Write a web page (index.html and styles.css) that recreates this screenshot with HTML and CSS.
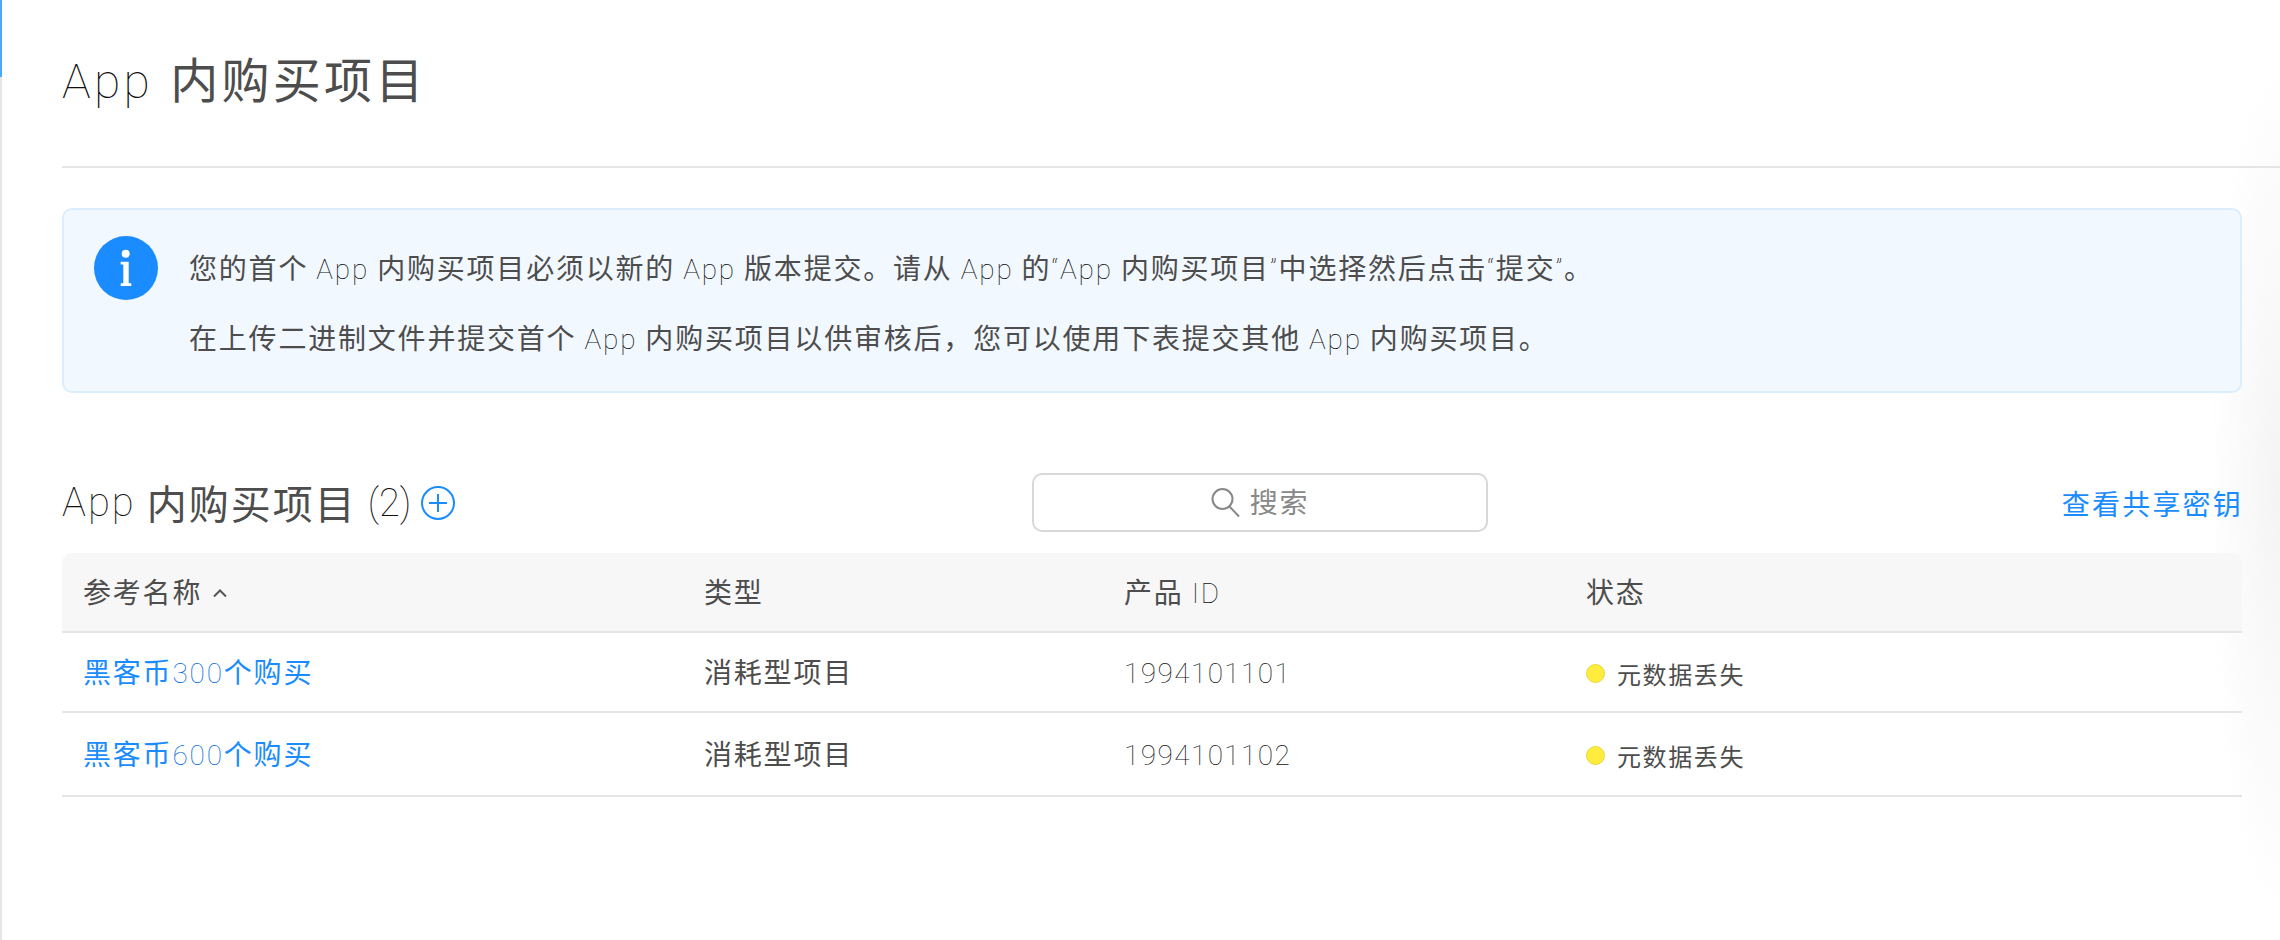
FILE: index.html
```html
<!DOCTYPE html>
<html lang="zh-CN">
<head>
    <meta charset="UTF-8">
    <title>App 内购买项目</title>
    <link rel="stylesheet" href="styles.css">
</head>
<body>
    <div class="page">
        <div class="rail"><div class="rail-active"></div></div>
        <main class="main">
            <header class="page-header">
                <h1><span class="thin">App</span> 内购买项目</h1>
            </header>

            <section class="notice">
                <svg class="notice-icon" viewBox="0 0 64 64" width="64" height="64">
                    <circle cx="32" cy="32" r="32" fill="#1a8cff"/>
                    <circle cx="31.7" cy="17.7" r="4" fill="#fff"/>
                    <path d="M26.7 25.7h8v21.6h2.6V50H26.7v-2.7h2.6V28.4h-2.6z" fill="#fff"/>
                </svg>
                <div class="notice-text">
                    <p>您的首个 <span class="thin">App</span> 内购买项目必须以新的 <span class="thin">App</span> 版本提交。请从 <span class="thin">App</span> 的<span class="thin">“App</span> 内购买项目<span class="thin">”</span>中选择然后点击<span class="thin">“</span>提交<span class="thin">”</span>。</p>
                    <p>在上传二进制文件并提交首个 <span class="thin">App</span> 内购买项目以供审核后，您可以使用下表提交其他 <span class="thin">App</span> 内购买项目。</p>
                </div>
            </section>

            <section class="list-head">
                <h2><span class="thin">App</span> 内购买项目 <span class="thin count">(2)</span>
                    <svg class="add-icon" viewBox="0 0 34 34" width="34" height="34">
                        <circle cx="17" cy="17" r="16" fill="none" stroke="#1a8cff" stroke-width="2"/>
                        <path d="M8 17h18M17 8v18" fill="none" stroke="#1a8cff" stroke-width="2"/>
                    </svg>
                </h2>
                <div class="search">
                    <svg viewBox="0 0 30 30" width="30" height="30">
                        <circle cx="11.5" cy="11" r="10" fill="none" stroke="#888" stroke-width="2"/>
                        <path d="M18.5 18.5l9.5 10" fill="none" stroke="#888" stroke-width="2"/>
                    </svg>
                    <span class="search-label">搜索</span>
                </div>
                <a class="shared-key" href="#">查看共享密钥</a>
            </section>

            <table class="products">
                <thead>
                    <tr>
                        <th class="col-name">参考名称
                            <svg class="sort-icon" viewBox="0 0 14 8" width="14" height="8">
                                <path d="M1 7.5l6-6 6 6" fill="none" stroke="#555" stroke-width="2"/>
                            </svg>
                        </th>
                        <th class="col-type">类型</th>
                        <th class="col-id">产品 <span class="thin">ID</span></th>
                        <th>状态</th>
                    </tr>
                </thead>
                <tbody>
                    <tr>
                        <td><a href="#">黑客币<span class="thin">300</span>个购买</a></td>
                        <td>消耗型项目</td>
                        <td><span class="thin num">1994101101</span></td>
                        <td><span class="status"><i class="dot"></i>元数据丢失</span></td>
                    </tr>
                    <tr>
                        <td><a href="#">黑客币<span class="thin">600</span>个购买</a></td>
                        <td>消耗型项目</td>
                        <td><span class="thin num">1994101102</span></td>
                        <td><span class="status"><i class="dot"></i>元数据丢失</span></td>
                    </tr>
                </tbody>
            </table>
        </main>
    </div>
</body>
</html>
```

FILE: styles.css
```css
html, body {
    margin: 0;
    padding: 0;
    height: 100%;
}
body {
    font-family: "Noto Sans CJK SC", sans-serif;
    font-size: 28px;
    letter-spacing: 1.8px;
    color: #4d4d4d;
    background-color: #fff;
    overflow: hidden;
}
a {
    color: #1a8cff;
    text-decoration: none;
}
.thin {
    font-family: Roboto, "Noto Sans CJK SC", sans-serif;
    font-weight: 100;
    line-height: 1;
    color: #111;
}
a .thin {
    color: #0068e0;
}
.page {
    display: flex;
    height: 940px;
}
.rail {
    width: 2px;
    background-color: #e5e5e5;
}
.rail-active {
    height: 77px;
    background-color: #4aa8ff;
}
.main {
    flex: 1;
    padding: 0 38px 0 60px;
    background: radial-gradient(ellipse 70px 430px at 100% 490px, #f4f4f4 0%, #fafafa 55%, #fff 100%);
}
.page-header {
    margin-right: -38px;
    padding: 48px 0 60px;
    border-bottom: 2px solid #e5e5e5;
}
h1 {
    margin: 0;
    font-size: 48px;
    font-weight: 400;
    line-height: 58px;
    letter-spacing: 3.3px;
}
h1 .thin {
    margin-right: 3px;
}
.notice {
    display: flex;
    align-items: flex-start;
    margin-top: 40px;
    padding: 26px 30px;
    border: 2px solid #dcedfd;
    border-radius: 10px;
    background-color: #f2f8ff;
}
.notice-icon {
    flex: none;
}
.notice-text {
    margin-left: 31px;
    padding: 10px 0 7px;
}
.notice-text p {
    margin: 0;
    line-height: 42px;
}
.notice-text p + p {
    margin-top: 28px;
}
.list-head {
    display: grid;
    grid-template-columns: 970px 456px 1fr;
    align-items: center;
    margin-top: 80px;
}
h2 {
    display: flex;
    align-items: center;
    margin: 0;
    font-size: 40px;
    font-weight: 400;
    line-height: 59px;
    letter-spacing: 2px;
    white-space: pre-wrap;
}
.count {
    font-size: 38px;
    letter-spacing: 0;
}
.add-icon {
    margin-left: 10px;
}
.search {
    display: flex;
    align-items: center;
    justify-content: center;
    gap: 9px;
    box-sizing: border-box;
    height: 59px;
    border: 2px solid #d8d8d8;
    border-radius: 10px;
    background-color: #fff;
    color: #888;
}
.search-label {
    margin-bottom: 4px;
}
.shared-key {
    justify-self: end;
    margin-right: -1px;
    letter-spacing: 2.2px;
}
.products {
    width: 100%;
    margin-top: 21px;
    border-collapse: separate;
    border-spacing: 0;
}
.products th,
.products td {
    padding: 0 21px 3px;
    text-align: left;
    font-weight: 400;
    border-bottom: 2px solid #e5e5e5;
}
.products th {
    height: 75px;
    background-color: #f7f7f7;
}
.products th:first-child {
    border-top-left-radius: 10px;
}
.products th:last-child {
    border-top-right-radius: 10px;
}
.products td {
    height: 75px;
}
.products tbody tr:last-child td {
    height: 79px;
}
.col-name {
    width: 579px;
}
.col-type {
    width: 378px;
}
.col-id {
    width: 420px;
}
.sort-icon {
    margin-left: 3px;
    vertical-align: 6px;
}
.num {
    letter-spacing: 1.4px;
}
.status {
    display: inline-flex;
    align-items: center;
    padding-top: 6px;
    font-size: 24px;
    letter-spacing: 1.6px;
}
.dot {
    box-sizing: border-box;
    width: 19px;
    height: 19px;
    margin-right: 12px;
    border: 1px solid #e8d83c;
    border-radius: 50%;
    background-color: #ffec3d;
}
```
